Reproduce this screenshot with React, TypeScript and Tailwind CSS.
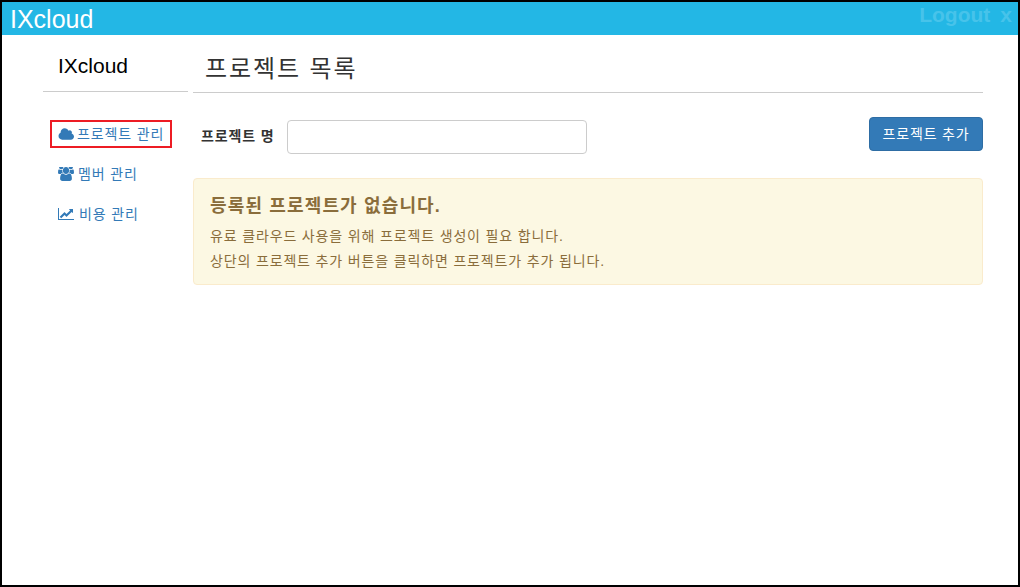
const font = "font-['Liberation_Sans','Noto_Sans_CJK_KR',sans-serif]";

function Cloud() {
  return (
    <svg viewBox="0 0 1984 1792" className="w-4 h-[15px] fill-current shrink-0">
      <path d="M1984 1152q0 159-112.5 271.5t-271.5 112.5h-1088q-185 0-316.5-131.5t-131.5-316.5q0-132 71-241.5t187-163.5q-2-28-2-43 0-212 150-362t362-150q158 0 286.5 88t187.5 230q70-62 166-62 106 0 181 75t75 181q0 75-41 138 129 30 213 134.5t84 239.5z" />
    </svg>
  );
}

function Users() {
  return (
    <svg viewBox="0 0 1920 1536" preserveAspectRatio="none" className="w-4 h-[14px] fill-current shrink-0">
      <path d="M593 640q-162 5-265 128h-134q-82 0-138-40.5t-56-118.5q0-353 124-353 6 0 43.5 21t97.5 42.5 119 21.5q67 0 133-23-5 37-5 66 0 139 81 256zm1071 637q0 120-73 189.5t-194 69.5h-874q-121 0-194-69.5t-73-189.5q0-53 3.5-103.5t14-109 26.5-108.5 43-97.5 62-81 85.5-53.5 111.5-20q10 0 43 21.5t73 48 107 48 135 21.5 135-21.5 107-48 73-48 43-21.5q61 0 111.5 20t85.5 53.5 62 81 43 97.5 26.5 108.5 14 109 3.5 103.5zm-1024-1277q0 106-75 181t-181 75-181-75-75-181 75-181 181-75 181 75 75 181zm704 384q0 159-112.5 271.5t-271.5 112.5-271.5-112.5-112.5-271.5 112.5-271.5 271.5-112.5 271.5 112.5 112.5 271.5zm576 225q0 78-56 118.5t-138 40.5h-134q-103-123-265-128 81-117 81-256 0-29-5-66 66 23 133 23 59 0 119-21.5t97.5-42.5 43.5-21q124 0 124 353zm-128-609q0 106-75 181t-181 75-181-75-75-181 75-181 181-75 181 75 75 181z" />
    </svg>
  );
}

function LineChart() {
  return (
    <svg viewBox="0 0 2048 1792" className="w-4 h-[14px] fill-current shrink-0">
      <path d="M2048 1536v128h-2048v-1536h128v1408h1920zm-128-1248v435q0 21-19.5 29.5t-35.5-7.5l-121-121-633 633q-10 10-23 10t-23-10l-233-233-416 416-192-192 585-585q10-10 23-10t23 10l233 233 464-464-121-121q-16-16-7.5-35.5t29.5-19.5h435q14 0 23 9t9 23z" />
    </svg>
  );
}

export default function App() {
  return (
    <div className={`h-[587px] w-[1020px] border-2 border-black bg-white flex flex-col ${font}`}>
      <header className="h-[33px] shrink-0 bg-[#23b7e5] flex items-center justify-between pl-2 pr-[6px]">
        <span className="text-[25px] leading-[30px] text-white">IXcloud</span>
        <span className="flex gap-[10px] text-[21px] leading-[26px] font-bold text-[#47c3ea] mb-[7px]">
          <span>Logout</span>
          <span>x</span>
        </span>
      </header>
      <div className="flex flex-1 pl-[41px] pr-[35px]">
        <aside className="w-[145px] shrink-0">
          <div className="h-[57px] border-b border-[#ccc] pl-[15px] pt-[18px] text-[21px] leading-[26px] text-black">IXcloud</div>
          <nav className="mt-[28px] flex flex-col text-[14px] leading-5 tracking-[0.85px] text-[#337ab7]">
            <a className="ml-[7px] w-[122px] h-[28px] border-2 border-[#ed1c24] flex items-center pl-[6px] gap-[3px] whitespace-nowrap">
              <Cloud />
              <span>프로젝트 관리</span>
            </a>
            <a className="ml-[15px] mt-[16px] h-5 flex items-center gap-1">
              <Users />
              <span>멤버 관리</span>
            </a>
            <a className="ml-[15px] mt-5 h-5 flex items-center gap-[5px]">
              <LineChart />
              <span>비용 관리</span>
            </a>
          </nav>
        </aside>
        <main className="ml-[5px] flex-1">
          <div className="h-[58px] border-b border-[#ccc] pl-[12px] pt-[17px] text-[24px] leading-[34px] tracking-[1.9px] text-[#333]">프로젝트 목록</div>
          <div className="mt-[24px] flex items-start justify-between">
            <div className="mt-[3px] flex items-center pl-2">
              <label className="w-[86px] mb-[2px] text-[14px] font-bold tracking-[0.85px] text-[#333] whitespace-nowrap">프로젝트 명</label>
              <input className="w-[300px] h-[34px] rounded border border-[#ccc] bg-white" />
            </div>
            <button className="w-[114px] h-[34px] rounded border border-[#2e6da4] bg-[#337ab7] text-white text-[14px] tracking-[0.85px]">프로젝트 추가</button>
          </div>
          <div className="mt-[24px] h-[107px] rounded border border-[#faebcc] bg-[#fcf8e3] pl-[16px] pt-[15px] text-[#8a6d3b]">
            <h4 className="text-[18px] leading-[24px] font-bold tracking-[1.15px]">등록된 프로젝트가 없습니다.</h4>
            <p className="mt-[6px] text-[14px] leading-[25px] tracking-[0.85px]">유료 클라우드 사용을 위해 프로젝트 생성이 필요 합니다.</p>
            <p className="text-[14px] leading-[25px] tracking-[0.85px]">상단의 프로젝트 추가 버튼을 클릭하면 프로젝트가 추가 됩니다.</p>
          </div>
        </main>
      </div>
    </div>
  );
}
